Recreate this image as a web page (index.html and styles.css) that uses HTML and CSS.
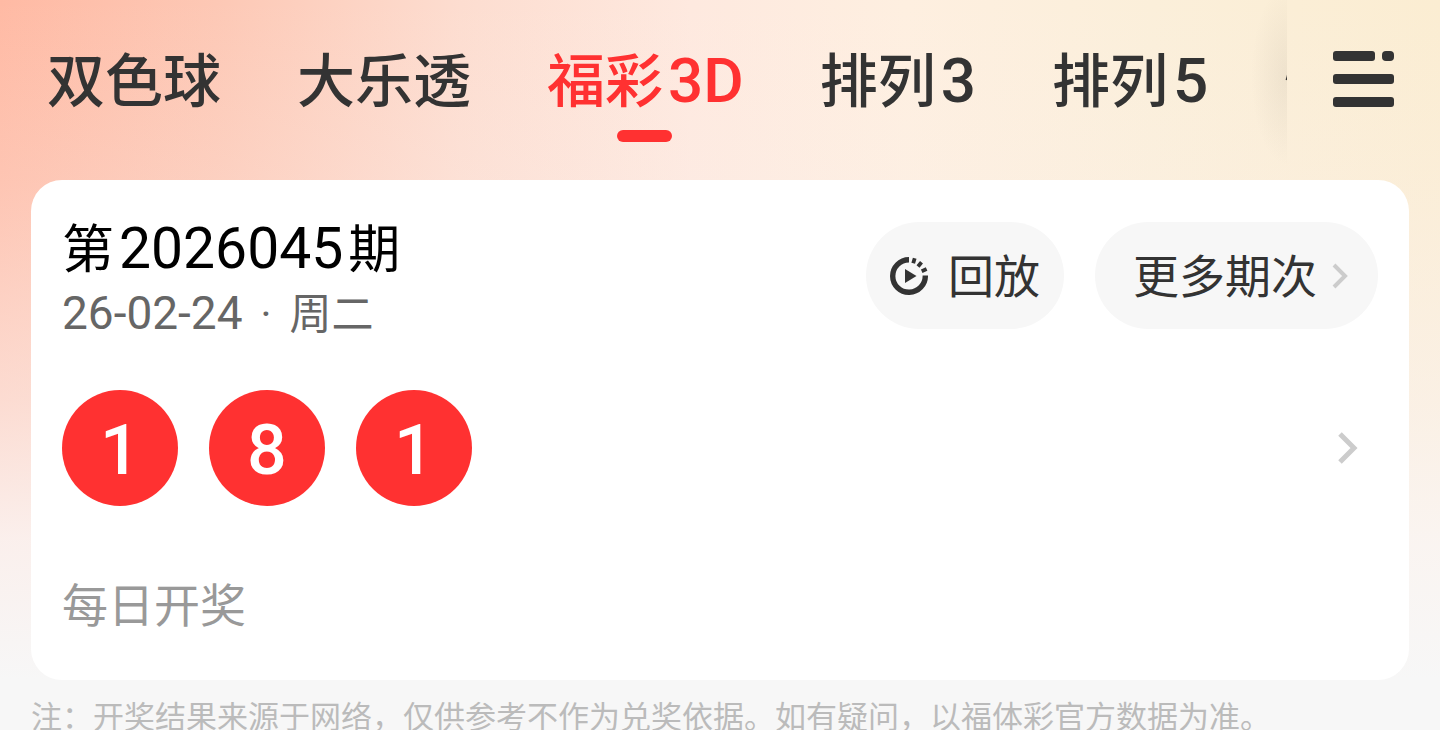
FILE: index.html
```html
<!DOCTYPE html>
<html lang="zh-CN">
<head>
<meta charset="utf-8">
<meta name="viewport" content="width=device-width, initial-scale=1">
<title>福彩3D 开奖</title>
<link rel="stylesheet" href="styles.css">
</head>
<body>
<div class="page">
  <header class="topbar">
    <nav class="tabs" aria-label="彩种">
      <button class="tab" type="button">双色球</button>
      <button class="tab" type="button">大乐透</button>
      <button class="tab tab-active" type="button" aria-current="page">福彩<span class="latin">3D</span></button>
      <button class="tab" type="button">排列<span class="latin">3</span></button>
      <button class="tab" type="button">排列<span class="latin">5</span></button>
      <button class="tab" type="button">快乐<span class="latin">8</span></button>
    </nav>
    <button class="menu" type="button" aria-label="全部彩种">
      <svg width="62" height="56" viewBox="0 0 62 56" fill="#333" aria-hidden="true">
        <rect x="0" y="0" width="42" height="10" rx="3"/>
        <rect x="49" y="0" width="12" height="10" rx="4"/>
        <rect x="0" y="23" width="61" height="10" rx="3"/>
        <rect x="0" y="46" width="61" height="10" rx="3"/>
      </svg>
    </button>
  </header>

  <main class="card">
    <div class="card-head">
      <div class="issue">
        <h1 class="issue-title">第<span class="issue-number">2026045</span>期</h1>
        <p class="issue-date"><span class="date-number">26-02-24</span><span class="dot">·</span>周二</p>
      </div>
      <div class="actions">
        <button class="pill pill-replay" type="button">
          <svg width="38" height="38" viewBox="0 0 38 38" aria-hidden="true">
            <path d="M19 2.700A16.300 16.300 0 1 0 35.300 18.500" fill="none" stroke="#333" stroke-width="5.400"/>
            <path d="M23.200 6.200L24.700 1.300M28 9.500L31.500 5.200M31.700 14.200L36.600 12" fill="none" stroke="#333" stroke-width="3.800"/>
            <path d="M15 12v14L26.500 19z" fill="#333"/>
          </svg>
          <span class="pill-label">回放</span>
        </button>
        <button class="pill pill-more" type="button">
          <span class="pill-label">更多期次</span>
          <svg width="16" height="26" viewBox="0 0 16 26" aria-hidden="true">
            <path d="M2 2L13 13L2 24" fill="none" stroke="#ccc" stroke-width="4"/>
          </svg>
        </button>
      </div>
    </div>
    <a class="result" href="#detail" aria-label="开奖详情">
      <span class="ball">1</span>
      <span class="ball">8</span>
      <span class="ball">1</span>
      <svg class="result-arrow" width="20" height="32" viewBox="0 0 20 32" aria-hidden="true">
        <path d="M2 2L16 16L2 30" fill="none" stroke="#ccc" stroke-width="5"/>
      </svg>
    </a>
    <p class="schedule">每日开奖</p>
  </main>
  <p class="note">注：开奖结果来源于网络，仅供参考不作为兑奖依据。如有疑问，以福体彩官方数据为准。</p>
</div>
</body>
</html>
```
FILE: styles.css
```css
* {
  box-sizing: border-box;
}

body {
  margin: 0;
  font-family: "Noto Sans CJK SC", sans-serif;
  color: #333;
  background: #f7f7f7;
}

h1,
p {
  margin: 0;
}

button {
  border: 0;
  padding: 0;
  background: none;
  color: inherit;
  font-family: inherit;
  cursor: pointer;
}

svg {
  display: block;
  flex: none;
}

.page {
  height: 100vh;
  overflow: hidden;
  padding: 0 31px;
  background:
    linear-gradient(180deg, rgba(247, 247, 247, 0) 0, rgba(250, 240, 238, 0.2) 180px, rgba(250, 242, 240, 0.6) 400px, rgba(250, 245, 244, 0.9) 540px, #f7f7f7 680px),
    linear-gradient(90deg, #ffbaa4 0%, #fdc8b5 15%, #fdddd0 32%, #fee9df 48%, #feefe0 63%, #fbefda 80%, #fbedd2 100%);
}

.topbar {
  display: flex;
  align-items: stretch;
  height: 180px;
  margin: 0 -31px;
}

.tabs {
  position: relative;
  display: flex;
  flex: 1;
  min-width: 0;
  gap: 76px;
  padding-left: 47px;
  overflow: hidden;
}

.tabs::after {
  content: "";
  position: absolute;
  inset: 0 0 0 auto;
  width: 40px;
  background: radial-gradient(ellipse 36px 90px at 100% 42%, rgba(90, 80, 70, 0.08), rgba(90, 80, 70, 0));
  pointer-events: none;
}

.tab {
  position: relative;
  flex: none;
  height: 154px;
  font-size: 58px;
  font-weight: 500;
  line-height: 154px;
  white-space: nowrap;
}

.latin {
  margin-left: 5px;
  font-family: Roboto, sans-serif;
  font-size: 62px;
}

.tab-active {
  color: #ff3131;
}

.tab-active::after {
  content: "";
  position: absolute;
  top: 130px;
  left: 50%;
  width: 55px;
  height: 12px;
  margin-left: -28px;
  border-radius: 6px;
  background: #ff3131;
}

.menu {
  display: flex;
  flex: none;
  justify-content: center;
  width: 153px;
  padding-top: 51px;
}

.card {
  padding: 42px 31px 49px;
  border-radius: 31px;
  background: #fff;
}

.card-head {
  display: flex;
  justify-content: space-between;
  align-items: flex-start;
  height: 107px;
}

.issue-title {
  color: #000;
  font-size: 52px;
  font-weight: 400;
  line-height: 48px;
}

.issue-number {
  margin: 0 5px;
  font-family: Roboto, sans-serif;
  font-size: 57px;
}

.issue-date {
  margin-top: 12px;
  color: #666;
  font-size: 42px;
  line-height: 52px;
}

.date-number {
  font-family: Roboto, sans-serif;
  font-size: 46px;
}

.dot {
  margin: 0 18px;
  font-family: Roboto, sans-serif;
}

.actions {
  display: flex;
  gap: 31px;
}

.pill {
  display: flex;
  align-items: center;
  height: 107px;
  border-radius: 54px;
  background: #f7f7f7;
  font-size: 46px;
}

.pill-label {
  padding-bottom: 6px;
}

.pill-replay {
  gap: 20px;
  padding: 0 24px;
}

.pill-more {
  gap: 15px;
  padding: 0 30px 0 38px;
}

.result {
  display: flex;
  align-items: center;
  gap: 31px;
  margin-top: 61px;
  color: inherit;
  text-decoration: none;
}

.ball {
  display: flex;
  align-items: center;
  justify-content: center;
  width: 116px;
  height: 116px;
  padding-top: 4px;
  border-radius: 50%;
  background: #ff3131;
  color: #fff;
  font-family: Roboto, sans-serif;
  font-size: 70px;
  font-weight: 500;
}

.result-arrow {
  margin-left: auto;
  margin-right: 20px;
}

.schedule {
  margin-top: 67px;
  color: #999;
  font-size: 46px;
  line-height: 58px;
}

.note {
  margin-top: 19px;
  color: #bbb;
  font-size: 31px;
  line-height: 32px;
  white-space: nowrap;
}
```
